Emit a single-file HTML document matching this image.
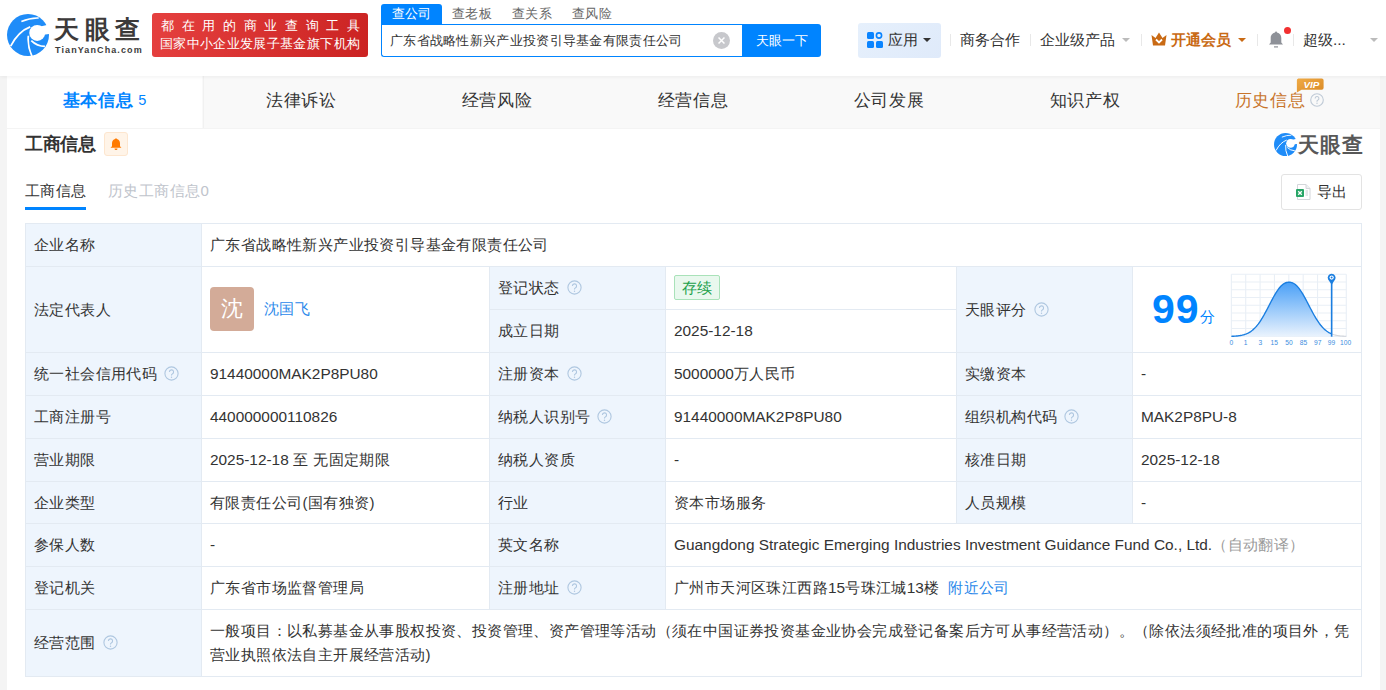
<!DOCTYPE html>
<html><head><meta charset="utf-8">
<style>
*{box-sizing:border-box;margin:0;padding:0}
html,body{width:1386px;height:690px;overflow:hidden}
body{background:#f4f4f4;text-spacing-trim:space-all;font-family:"Liberation Sans",sans-serif;color:#333;position:relative}
.abs{position:absolute}
#hdr{position:absolute;left:0;top:0;width:1386px;height:76px;background:#fff;box-shadow:0 1px 4px rgba(0,0,0,.06);z-index:5}
.badge{position:absolute;left:152px;top:13px;width:216px;height:44px;border-radius:3px;background:linear-gradient(100deg,#e5403f,#cb2322);color:#fff;font-size:13.2px;font-weight:500}
.badge .l1{position:absolute;left:9px;top:4px;width:199px;line-height:18px;text-align:justify;text-align-last:justify;letter-spacing:0}
.badge .l2{position:absolute;left:8px;top:22px;width:205px;line-height:18px;white-space:nowrap;letter-spacing:.35px}
.stabs{position:absolute;left:381px;top:4px;height:20px;font-size:13px;letter-spacing:.3px;line-height:20px}
.stab{position:absolute;top:0;height:20px;color:#666;white-space:nowrap}
.stab.on{background:#0084ff;color:#fff;border-radius:3px 3px 0 0;width:61px;text-align:center}
.sbox{position:absolute;left:381px;top:24px;width:362px;height:33px;border:1px solid #0084ff;border-right:0;border-radius:0 0 0 3px;background:#fff}
.sbox .t{position:absolute;left:8px;top:0;line-height:31px;font-size:13px;letter-spacing:.3px;color:#333;white-space:nowrap}
.sbtn{position:absolute;left:742px;top:24px;width:79px;height:33px;background:#0084ff;border-radius:0 3px 3px 0;color:#fff;font-size:13.2px;line-height:33px;text-align:center}
.nav{position:absolute;top:22px;height:35px;line-height:35px;font-size:15.4px;color:#333;white-space:nowrap}
.dv{position:absolute;top:34px;width:1px;height:12px;background:#e8e8e8}
.caret{position:absolute;width:0;height:0;border-left:4px solid transparent;border-right:4px solid transparent;border-top:4px solid #333}
#card{position:absolute;left:7px;top:76px;width:1373px;height:620px;background:#fff}
.tabbar{position:absolute;left:7px;top:76px;width:1373px;height:53px;background:#f9f9f9;border-bottom:1px solid #f4f4f4}
.tab{position:absolute;top:0;height:52px;line-height:50px;text-align:center;font-size:17px;letter-spacing:.6px;color:#333}
.tab.on{background:#fff;color:#0084ff;font-weight:bold}
.cl,.cv{position:absolute;border:1px solid #e3eaf2;margin:0;white-space:nowrap;font-size:15px;letter-spacing:.4px;color:#333}
.cl{background:#eef5fd}
.cv{background:#fff}
.in{position:absolute;left:8px;top:0;height:100%;display:flex;align-items:center}
.in>span{white-space:nowrap}
.q{margin-left:7px;vertical-align:-2px}
.n,.en{letter-spacing:0;font-size:15.4px}
.link{color:#2a88ea}
.gray{color:#999}
.avatar{display:inline-block;vertical-align:middle;position:relative;top:-2px;width:44px;height:44px;border-radius:4px;background:#d3ab98;color:#fff;font-size:22px;line-height:44px;text-align:center}
.tag{display:inline-block;vertical-align:middle;position:relative;top:-2px;height:25px;line-height:23px;width:46px;text-align:center;border:1px solid #a9e2b9;background:#e9f8ee;color:#22a04a;border-radius:2px;font-size:15px;letter-spacing:.2px}
.scopetxt{position:absolute;left:8px;top:9px;width:1140px;white-space:normal;line-height:24.4px;font-size:15px;letter-spacing:.4px}
</style></head><body>
<div id="hdr">
  <svg class="abs" style="left:7px;top:14px" width="42" height="42" viewBox="45 65 570 570">
    <circle cx="330" cy="350" r="285" fill="#1f8cf8"/>
    <circle cx="455" cy="322" r="108" fill="#fff"/>
    <path d="M470 240 L640 200 L640 335 L545 345 Z" fill="#fff"/>
    <path d="M240 168 Q360 115 475 120" stroke="#fff" stroke-width="22" fill="none"/>
    <path d="M95 500 Q200 300 360 240" stroke="#fff" stroke-width="24" fill="none"/>
    <path d="M335 360 Q320 500 385 640" stroke="#fff" stroke-width="24" fill="none"/>
    <path d="M375 425 Q450 500 560 505" stroke="#fff" stroke-width="24" fill="none"/>
  </svg>
  <div class="abs" style="left:54px;top:12px;font-size:25px;line-height:34px;font-weight:bold;color:#3c3a3a;letter-spacing:5.5px;white-space:nowrap">天眼查</div>
  <div class="abs" style="left:55px;top:44px;font-size:9px;line-height:12px;font-weight:bold;color:#3c3c3c;letter-spacing:1.1px;white-space:nowrap">TianYanCha.com</div>
  <div class="badge"><div class="l1">都在用的商业查询工具</div><div class="l2">国家中小企业发展子基金旗下机构</div></div>
  <div class="stabs">
    <div class="stab on" style="left:0">查公司</div>
    <div class="stab" style="left:71px">查老板</div>
    <div class="stab" style="left:131px">查关系</div>
    <div class="stab" style="left:191px">查风险</div>
  </div>
  <div class="sbox"><div class="t">广东省战略性新兴产业投资引导基金有限责任公司</div>
    <svg class="abs" style="left:331px;top:7px" width="17" height="17" viewBox="0 0 16 16"><circle cx="8" cy="8" r="8" fill="#c7c8cc"/><path d="M5.2 5.2L10.8 10.8M10.8 5.2L5.2 10.8" stroke="#fff" stroke-width="1.4"/></svg>
  </div>
  <div class="sbtn">天眼一下</div>
  <div class="abs" style="left:858px;top:23px;width:83px;height:35px;border-radius:3px;background:linear-gradient(135deg,#e6f0fc,#dfeafa)"></div>
  <svg class="abs" style="left:867px;top:32px" width="16" height="16" viewBox="0 0 16 16"><rect x="0" y="0" width="7" height="7" rx="1.5" fill="#0a84ff"/><circle cx="12" cy="3.5" r="2.6" fill="none" stroke="#0a84ff" stroke-width="1.6"/><rect x="0" y="9" width="7" height="7" rx="1.5" fill="#0a84ff"/><rect x="9" y="9" width="7" height="7" rx="1.5" fill="#0a84ff"/></svg>
  <div class="nav" style="left:888px">应用</div>
  <div class="caret" style="left:923px;top:38px"></div>
  <div class="dv" style="left:950px"></div>
  <div class="nav" style="left:960px">商务合作</div>
  <div class="dv" style="left:1030px"></div>
  <div class="nav" style="left:1040px">企业级产品</div>
  <div class="caret" style="left:1122px;top:38px;border-top-color:#bbb"></div>
  <div class="dv" style="left:1141px"></div>
  <svg class="abs" style="left:1151px;top:32px" width="16" height="14" viewBox="0 0 16 14"><path d="M0.5 3 L4.5 6 L8 0.5 L11.5 6 L15.5 3 L14 13.5 L2 13.5 Z" fill="#c96a14"/><path d="M5 7.5 L8 10.5 L11 7.5" stroke="#fff" stroke-width="1.8" fill="none"/></svg>
  <div class="nav" style="left:1171px;color:#c96a14;font-weight:bold">开通会员</div>
  <div class="caret" style="left:1238px;top:38px;border-top-color:#c96a14"></div>
  <div class="dv" style="left:1257px"></div>
  <svg class="abs" style="left:1268px;top:31px" width="16" height="17" viewBox="0 0 16 17"><path d="M8 0.5c.6 0 1 .4 1 .9 2.8.5 4.3 2.8 4.3 5.6v4.5l1.7 2H1l1.7-2V7c0-2.8 1.5-5.1 4.3-5.6 0-.5.4-.9 1-.9z" fill="#8e9198"/><rect x="6" y="15.3" width="4" height="1.2" fill="#8e9198"/></svg>
  <div class="abs" style="left:1284px;top:27px;width:7px;height:7px;border-radius:50%;background:#f23030"></div>
  <div class="dv" style="left:1293px"></div>
  <div class="nav" style="left:1303px">超级...</div>
  <div class="caret" style="left:1370px;top:38px;border-top-color:#bbb"></div>
</div>
<div id="card"></div>
<div class="tabbar">
  <div class="tab on" style="left:0;width:195px">基本信息<span style="font-weight:normal;font-size:14.5px;letter-spacing:0;margin-left:5px;position:relative;top:-1px">5</span></div>
  <div class="tab" style="left:196px;width:196px;border-left:1px solid #f1f1f1">法律诉讼</div>
  <div class="tab" style="left:392px;width:196px">经营风险</div>
  <div class="tab" style="left:588px;width:196px">经营信息</div>
  <div class="tab" style="left:784px;width:196px">公司发展</div>
  <div class="tab" style="left:980px;width:196px">知识产权</div>
  <div class="tab" style="left:1174px;width:197px;color:#c8742a">历史信息<svg style="margin-left:5px;vertical-align:-1px" width="14" height="14" viewBox="0 0 14 14"><circle cx="7" cy="7" r="6.3" fill="none" stroke="#bfcad6" stroke-width="1.1"/><path d="M5.1 5.4a1.9 1.9 0 1 1 2.6 1.8c-.5.2-.7.5-.7 1v.5" fill="none" stroke="#bfcad6" stroke-width="1.1"/><circle cx="7" cy="10.3" r=".7" fill="#bfcad6"/></svg></div>
  <svg class="abs" style="left:1289px;top:2px" width="28" height="15" viewBox="0 0 29 16"><defs><linearGradient id="vg" x1="0" y1="0" x2="1" y2="1"><stop offset="0" stop-color="#f0ab45"/><stop offset="1" stop-color="#d98926"/></linearGradient></defs><path d="M2 0.5h25a2 2 0 0 1 2 2v8a2 2 0 0 1-2 2H5.5L0.5 15.5V2.5a2 2 0 0 1 1.5-2z" fill="url(#vg)"/><text x="16" y="10.5" text-anchor="middle" font-size="10.5" font-weight="bold" font-style="italic" fill="#fff" font-family="Liberation Sans">VIP</text></svg>
</div>
<div class="abs" style="left:25px;top:130px;font-size:18px;letter-spacing:-.3px;line-height:28px;font-weight:bold;color:#333">工商信息</div>
<div class="abs" style="left:104px;top:132px;width:24px;height:24px;border-radius:3px;background:#fff4e8;border:1px solid #fde6cf"></div><svg class="abs" style="left:110px;top:138px" width="12" height="12" viewBox="0 0 12 12"><path d="M6 0.3c.5 0 .8.3.8.7 2 .4 3.2 2 3.2 4.2v3l1.5 1.6H.5L2 8.2v-3C2 3 3.2 1.4 5.2 1c0-.4.3-.7.8-.7z" fill="#ff7a00"/><path d="M4.5 10.6h3a1.5 1.5 0 0 1-3 0z" fill="#ff7a00"/></svg>
<div class="abs" style="left:25px;top:178px;font-size:15px;letter-spacing:.4px;line-height:26px;color:#333">工商信息</div>
<div class="abs" style="left:25px;top:207px;width:61px;height:3px;background:#0084ff"></div>
<div class="abs" style="left:108px;top:178px;font-size:15px;letter-spacing:.4px;line-height:26px;color:#c0c4cc">历史工商信息0</div>
<div class="abs" style="left:1281px;top:174px;width:81px;height:36px;border:1px solid #e3e3e3;border-radius:3px"></div>
<svg class="abs" style="left:1295px;top:184px" width="16" height="16" viewBox="0 0 16 16"><path d="M2.5 0.5h8.5l4 4v11H2.5z" fill="#fff" stroke="#d3d6da" stroke-width="1"/><path d="M11 0.5v4h4" fill="#f0f1f3" stroke="#d3d6da" stroke-width="1"/><rect x="10.5" y="6.5" width="2.5" height="1" fill="#c9ced4"/><rect x="10.5" y="8.5" width="2.5" height="1" fill="#c9ced4"/><rect x="10.5" y="10.5" width="2.5" height="1" fill="#c9ced4"/><rect x="1" y="5" width="8" height="8" rx="1" fill="#27a566"/><path d="M3.2 7.2L6.8 10.8M6.8 7.2L3.2 10.8" stroke="#fff" stroke-width="1.3"/></svg>
<div class="abs" style="left:1317px;top:179px;font-size:15px;letter-spacing:.4px;line-height:26px;color:#333">导出</div>
<svg class="abs" style="left:1274px;top:133px" width="23" height="23" viewBox="45 65 570 570"><circle cx="330" cy="350" r="285" fill="#1f8cf8"/><circle cx="455" cy="322" r="108" fill="#fff"/><path d="M470 240 L640 200 L640 335 L545 345 Z" fill="#fff"/><path d="M240 168 Q360 115 475 120" stroke="#fff" stroke-width="22" fill="none"/><path d="M95 500 Q200 300 360 240" stroke="#fff" stroke-width="24" fill="none"/><path d="M335 360 Q320 500 385 640" stroke="#fff" stroke-width="24" fill="none"/><path d="M375 425 Q450 500 560 505" stroke="#fff" stroke-width="24" fill="none"/></svg>
<div class="abs" style="left:1298px;top:130px;font-size:21px;line-height:30px;font-weight:bold;color:#585858;white-space:nowrap;letter-spacing:1px">天眼查</div>
<div class="cl" style="left:25px;top:223px;width:177px;height:44px;line-height:42px"><div class="in"><span>企业名称</span></div></div>
<div class="cv" style="left:201px;top:223px;width:1161px;height:44px;line-height:42px"><div class="in"><span>广东省战略性新兴产业投资引导基金有限责任公司</span></div></div>
<div class="cl" style="left:25px;top:266px;width:177px;height:87px;line-height:85px"><div class="in"><span>法定代表人</span></div></div>
<div class="cv" style="left:201px;top:266px;width:289px;height:87px;line-height:85px"><div class="in"><span><span class="avatar">沈</span><span class="link" style="margin-left:10px;position:relative;top:-1px">沈国飞</span></span></div></div>
<div class="cl" style="left:489px;top:266px;width:177px;height:44px;line-height:42px"><div class="in"><span>登记状态<svg class="q" width="15" height="15" viewBox="0 0 15 15"><circle cx="7.5" cy="7.5" r="6.6" fill="none" stroke="#afc7e0" stroke-width="1.1"/><path d="M5.4 5.9a2.1 2.1 0 1 1 2.9 2c-.55.25-.8.55-.8 1.1v.6" fill="none" stroke="#afc7e0" stroke-width="1.1"/><circle cx="7.5" cy="11.2" r=".7" fill="#afc7e0"/></svg></span></div></div>
<div class="cv" style="left:665px;top:266px;width:292px;height:44px;line-height:42px"><div class="in"><span><span class="tag">存续</span></span></div></div>
<div class="cl" style="left:489px;top:309px;width:177px;height:44px;line-height:42px"><div class="in"><span>成立日期</span></div></div>
<div class="cv" style="left:665px;top:309px;width:292px;height:44px;line-height:42px"><div class="in"><span><span class="n">2025-12-18</span></span></div></div>
<div class="cl" style="left:956px;top:266px;width:177px;height:87px;line-height:85px"><div class="in"><span>天眼评分<svg class="q" width="15" height="15" viewBox="0 0 15 15"><circle cx="7.5" cy="7.5" r="6.6" fill="none" stroke="#afc7e0" stroke-width="1.1"/><path d="M5.4 5.9a2.1 2.1 0 1 1 2.9 2c-.55.25-.8.55-.8 1.1v.6" fill="none" stroke="#afc7e0" stroke-width="1.1"/><circle cx="7.5" cy="11.2" r=".7" fill="#afc7e0"/></svg></span></div></div>
<div class="cv" style="left:1132px;top:266px;width:230px;height:87px"><div class="abs" style="left:19px;top:14px;font-size:41px;line-height:56px;font-weight:bold;color:#0084ff;letter-spacing:1px">99</div>
<div class="abs" style="left:67px;top:37px;font-size:15px;line-height:26px;color:#0084ff">分</div>
<svg class="abs" style="left:87px;top:-2px" width="140" height="85" viewBox="0 0 1136 690">
<defs><linearGradient id="bg" x1="0" y1="0" x2="0" y2="1"><stop offset="0" stop-color="#4aa0f7"/><stop offset="1" stop-color="#eaf3fd"/></linearGradient></defs>
<line x1="92" y1="75" x2="92" y2="580" stroke="#e9eff6" stroke-width="9"/><line x1="208.6" y1="75" x2="208.6" y2="580" stroke="#e9eff6" stroke-width="9"/><line x1="325.2" y1="75" x2="325.2" y2="580" stroke="#e9eff6" stroke-width="9"/><line x1="441.8" y1="75" x2="441.8" y2="580" stroke="#e9eff6" stroke-width="9"/><line x1="558.5" y1="75" x2="558.5" y2="580" stroke="#e9eff6" stroke-width="9"/><line x1="675" y1="75" x2="675" y2="580" stroke="#e9eff6" stroke-width="9"/><line x1="791.7" y1="75" x2="791.7" y2="580" stroke="#e9eff6" stroke-width="9"/><line x1="908.3" y1="75" x2="908.3" y2="580" stroke="#e9eff6" stroke-width="9"/><line x1="1025" y1="75" x2="1025" y2="580" stroke="#e9eff6" stroke-width="9"/><line x1="92" y1="75" x2="1025" y2="75" stroke="#e9eff6" stroke-width="9"/><line x1="92" y1="138" x2="1025" y2="138" stroke="#e9eff6" stroke-width="9"/><line x1="92" y1="201" x2="1025" y2="201" stroke="#e9eff6" stroke-width="9"/><line x1="92" y1="264" x2="1025" y2="264" stroke="#e9eff6" stroke-width="9"/><line x1="92" y1="327" x2="1025" y2="327" stroke="#e9eff6" stroke-width="9"/><line x1="92" y1="390" x2="1025" y2="390" stroke="#e9eff6" stroke-width="9"/><line x1="92" y1="453" x2="1025" y2="453" stroke="#e9eff6" stroke-width="9"/><line x1="92" y1="516" x2="1025" y2="516" stroke="#e9eff6" stroke-width="9"/><line x1="92" y1="580" x2="1025" y2="580" stroke="#e9eff6" stroke-width="9"/>
<path d="M92.0 578.9 L98.8 578.6 L105.6 578.4 L112.4 578.0 L119.2 577.6 L126.0 577.2 L132.8 576.6 L139.6 576.0 L146.4 575.3 L153.2 574.4 L160.0 573.5 L166.8 572.3 L173.6 571.1 L180.4 569.6 L187.2 567.9 L194.0 566.1 L200.8 563.9 L207.6 561.6 L214.4 558.9 L221.2 555.9 L228.0 552.6 L234.8 549.0 L241.6 544.9 L248.4 540.5 L255.2 535.7 L262.0 530.4 L268.8 524.6 L275.6 518.4 L282.4 511.7 L289.2 504.5 L296.0 496.8 L302.8 488.6 L309.6 479.9 L316.4 470.7 L323.2 460.9 L330.0 450.7 L336.8 440.1 L343.6 429.0 L350.4 417.4 L357.2 405.6 L364.0 393.3 L370.8 380.8 L377.6 368.0 L384.4 355.1 L391.2 342.0 L398.0 328.8 L404.8 315.6 L411.6 302.5 L418.4 289.5 L425.2 276.7 L432.0 264.2 L438.8 251.9 L445.6 240.1 L452.4 228.7 L459.2 217.8 L466.0 207.5 L472.8 197.8 L479.6 188.8 L486.4 180.5 L493.2 172.9 L500.0 166.1 L506.8 160.1 L513.6 154.9 L520.4 150.5 L527.2 146.9 L534.0 144.2 L540.8 142.1 L547.6 140.8 L554.4 140.1 L561.2 140.0 L568.0 140.3 L574.8 141.2 L581.6 142.8 L588.4 145.1 L595.2 148.1 L602.0 152.0 L608.8 156.7 L615.6 162.1 L622.4 168.4 L629.2 175.5 L636.0 183.3 L642.8 191.9 L649.6 201.2 L656.4 211.1 L663.2 221.6 L670.0 232.7 L676.8 244.2 L683.6 256.2 L690.4 268.6 L697.2 281.2 L704.0 294.1 L710.8 307.1 L717.6 320.3 L724.4 333.5 L731.2 346.6 L738.0 359.7 L744.8 372.6 L751.6 385.3 L758.4 397.7 L765.2 409.8 L772.0 421.6 L778.8 432.9 L785.6 443.9 L792.4 454.4 L799.2 464.4 L806.0 474.0 L812.8 483.0 L819.6 491.6 L826.4 499.6 L833.2 507.1 L840.0 514.1 L846.8 520.7 L853.6 526.7 L860.4 532.3 L867.2 537.4 L874.0 542.1 L880.8 546.4 L887.6 550.3 L894.4 553.8 L901.2 557.0 L908.0 559.9 L908 580 L92 580 Z" fill="url(#bg)"/>
<path d="M92.0 578.9 L98.8 578.6 L105.6 578.4 L112.4 578.0 L119.2 577.6 L126.0 577.2 L132.8 576.6 L139.6 576.0 L146.4 575.3 L153.2 574.4 L160.0 573.5 L166.8 572.3 L173.6 571.1 L180.4 569.6 L187.2 567.9 L194.0 566.1 L200.8 563.9 L207.6 561.6 L214.4 558.9 L221.2 555.9 L228.0 552.6 L234.8 549.0 L241.6 544.9 L248.4 540.5 L255.2 535.7 L262.0 530.4 L268.8 524.6 L275.6 518.4 L282.4 511.7 L289.2 504.5 L296.0 496.8 L302.8 488.6 L309.6 479.9 L316.4 470.7 L323.2 460.9 L330.0 450.7 L336.8 440.1 L343.6 429.0 L350.4 417.4 L357.2 405.6 L364.0 393.3 L370.8 380.8 L377.6 368.0 L384.4 355.1 L391.2 342.0 L398.0 328.8 L404.8 315.6 L411.6 302.5 L418.4 289.5 L425.2 276.7 L432.0 264.2 L438.8 251.9 L445.6 240.1 L452.4 228.7 L459.2 217.8 L466.0 207.5 L472.8 197.8 L479.6 188.8 L486.4 180.5 L493.2 172.9 L500.0 166.1 L506.8 160.1 L513.6 154.9 L520.4 150.5 L527.2 146.9 L534.0 144.2 L540.8 142.1 L547.6 140.8 L554.4 140.1 L561.2 140.0 L568.0 140.3 L574.8 141.2 L581.6 142.8 L588.4 145.1 L595.2 148.1 L602.0 152.0 L608.8 156.7 L615.6 162.1 L622.4 168.4 L629.2 175.5 L636.0 183.3 L642.8 191.9 L649.6 201.2 L656.4 211.1 L663.2 221.6 L670.0 232.7 L676.8 244.2 L683.6 256.2 L690.4 268.6 L697.2 281.2 L704.0 294.1 L710.8 307.1 L717.6 320.3 L724.4 333.5 L731.2 346.6 L738.0 359.7 L744.8 372.6 L751.6 385.3 L758.4 397.7 L765.2 409.8 L772.0 421.6 L778.8 432.9 L785.6 443.9 L792.4 454.4 L799.2 464.4 L806.0 474.0 L812.8 483.0 L819.6 491.6 L826.4 499.6 L833.2 507.1 L840.0 514.1 L846.8 520.7 L853.6 526.7 L860.4 532.3 L867.2 537.4 L874.0 542.1 L880.8 546.4 L887.6 550.3 L894.4 553.8 L901.2 557.0 L908.0 559.9" fill="none" stroke="#1a7ee0" stroke-width="11"/>
<path d="M908.0 559.9 L913.9 562.1 L919.7 564.1 L925.5 565.9 L931.4 567.6 L937.2 569.0 L943.1 570.4 L949.0 571.6 L954.8 572.6 L960.6 573.6 L966.5 574.4 L972.4 575.1 L978.2 575.8 L984.0 576.4 L989.9 576.9 L995.8 577.3 L1001.6 577.7 L1007.5 578.0 L1013.3 578.3 L1019.1 578.6 L1025.0 578.8" fill="none" stroke="#d0d4da" stroke-width="9"/>
<line x1="906" y1="110" x2="906" y2="582" stroke="#1a7ee0" stroke-width="13"/>
<path d="M906 160 L878 118 A32 32 0 1 1 934 118 Z" fill="#1a7ee0"/>
<circle cx="906" cy="102" r="17" fill="#fff"/><circle cx="906" cy="102" r="8" fill="#1a7ee0"/>
<text x="92" y="652" text-anchor="middle" font-size="54" fill="#3a8de0" font-family="Liberation Sans">0</text><text x="208" y="652" text-anchor="middle" font-size="54" fill="#3a8de0" font-family="Liberation Sans">1</text><text x="328" y="652" text-anchor="middle" font-size="54" fill="#3a8de0" font-family="Liberation Sans">3</text><text x="440" y="652" text-anchor="middle" font-size="54" fill="#3a8de0" font-family="Liberation Sans">15</text><text x="560" y="652" text-anchor="middle" font-size="54" fill="#3a8de0" font-family="Liberation Sans">50</text><text x="677" y="652" text-anchor="middle" font-size="54" fill="#3a8de0" font-family="Liberation Sans">85</text><text x="793" y="652" text-anchor="middle" font-size="54" fill="#3a8de0" font-family="Liberation Sans">97</text><text x="905" y="652" text-anchor="middle" font-size="54" fill="#3a8de0" font-family="Liberation Sans">99</text><text x="1020" y="652" text-anchor="middle" font-size="54" fill="#3a8de0" font-family="Liberation Sans">100</text>
</svg></div>
<div class="cl" style="left:25px;top:352px;width:177px;height:44px;line-height:42px"><div class="in"><span>统一社会信用代码<svg class="q" width="15" height="15" viewBox="0 0 15 15"><circle cx="7.5" cy="7.5" r="6.6" fill="none" stroke="#afc7e0" stroke-width="1.1"/><path d="M5.4 5.9a2.1 2.1 0 1 1 2.9 2c-.55.25-.8.55-.8 1.1v.6" fill="none" stroke="#afc7e0" stroke-width="1.1"/><circle cx="7.5" cy="11.2" r=".7" fill="#afc7e0"/></svg></span></div></div>
<div class="cv" style="left:201px;top:352px;width:289px;height:44px;line-height:42px"><div class="in"><span><span class="n">91440000MAK2P8PU80</span></span></div></div>
<div class="cl" style="left:489px;top:352px;width:177px;height:44px;line-height:42px"><div class="in"><span>注册资本<svg class="q" width="15" height="15" viewBox="0 0 15 15"><circle cx="7.5" cy="7.5" r="6.6" fill="none" stroke="#afc7e0" stroke-width="1.1"/><path d="M5.4 5.9a2.1 2.1 0 1 1 2.9 2c-.55.25-.8.55-.8 1.1v.6" fill="none" stroke="#afc7e0" stroke-width="1.1"/><circle cx="7.5" cy="11.2" r=".7" fill="#afc7e0"/></svg></span></div></div>
<div class="cv" style="left:665px;top:352px;width:292px;height:44px;line-height:42px"><div class="in"><span><span class="n">5000000</span>万人民币</span></div></div>
<div class="cl" style="left:956px;top:352px;width:177px;height:44px;line-height:42px"><div class="in"><span>实缴资本</span></div></div>
<div class="cv" style="left:1132px;top:352px;width:230px;height:44px;line-height:42px"><div class="in"><span><span class="n">-</span></span></div></div>
<div class="cl" style="left:25px;top:395px;width:177px;height:44px;line-height:42px"><div class="in"><span>工商注册号</span></div></div>
<div class="cv" style="left:201px;top:395px;width:289px;height:44px;line-height:42px"><div class="in"><span><span class="n">440000000110826</span></span></div></div>
<div class="cl" style="left:489px;top:395px;width:177px;height:44px;line-height:42px"><div class="in"><span>纳税人识别号<svg class="q" width="15" height="15" viewBox="0 0 15 15"><circle cx="7.5" cy="7.5" r="6.6" fill="none" stroke="#afc7e0" stroke-width="1.1"/><path d="M5.4 5.9a2.1 2.1 0 1 1 2.9 2c-.55.25-.8.55-.8 1.1v.6" fill="none" stroke="#afc7e0" stroke-width="1.1"/><circle cx="7.5" cy="11.2" r=".7" fill="#afc7e0"/></svg></span></div></div>
<div class="cv" style="left:665px;top:395px;width:292px;height:44px;line-height:42px"><div class="in"><span><span class="n">91440000MAK2P8PU80</span></span></div></div>
<div class="cl" style="left:956px;top:395px;width:177px;height:44px;line-height:42px"><div class="in"><span>组织机构代码<svg class="q" width="15" height="15" viewBox="0 0 15 15"><circle cx="7.5" cy="7.5" r="6.6" fill="none" stroke="#afc7e0" stroke-width="1.1"/><path d="M5.4 5.9a2.1 2.1 0 1 1 2.9 2c-.55.25-.8.55-.8 1.1v.6" fill="none" stroke="#afc7e0" stroke-width="1.1"/><circle cx="7.5" cy="11.2" r=".7" fill="#afc7e0"/></svg></span></div></div>
<div class="cv" style="left:1132px;top:395px;width:230px;height:44px;line-height:42px"><div class="in"><span><span class="n">MAK2P8PU-8</span></span></div></div>
<div class="cl" style="left:25px;top:438px;width:177px;height:44px;line-height:42px"><div class="in"><span>营业期限</span></div></div>
<div class="cv" style="left:201px;top:438px;width:289px;height:44px;line-height:42px"><div class="in"><span><span class="n">2025-12-18</span> 至 无固定期限</span></div></div>
<div class="cl" style="left:489px;top:438px;width:177px;height:44px;line-height:42px"><div class="in"><span>纳税人资质</span></div></div>
<div class="cv" style="left:665px;top:438px;width:292px;height:44px;line-height:42px"><div class="in"><span><span class="n">-</span></span></div></div>
<div class="cl" style="left:956px;top:438px;width:177px;height:44px;line-height:42px"><div class="in"><span>核准日期</span></div></div>
<div class="cv" style="left:1132px;top:438px;width:230px;height:44px;line-height:42px"><div class="in"><span><span class="n">2025-12-18</span></span></div></div>
<div class="cl" style="left:25px;top:481px;width:177px;height:43px;line-height:41px"><div class="in"><span>企业类型</span></div></div>
<div class="cv" style="left:201px;top:481px;width:289px;height:43px;line-height:41px"><div class="in"><span>有限责任公司(国有独资)</span></div></div>
<div class="cl" style="left:489px;top:481px;width:177px;height:43px;line-height:41px"><div class="in"><span>行业</span></div></div>
<div class="cv" style="left:665px;top:481px;width:292px;height:43px;line-height:41px"><div class="in"><span>资本市场服务</span></div></div>
<div class="cl" style="left:956px;top:481px;width:177px;height:43px;line-height:41px"><div class="in"><span>人员规模</span></div></div>
<div class="cv" style="left:1132px;top:481px;width:230px;height:43px;line-height:41px"><div class="in"><span><span class="n">-</span></span></div></div>
<div class="cl" style="left:25px;top:523px;width:177px;height:44px;line-height:42px"><div class="in"><span>参保人数</span></div></div>
<div class="cv" style="left:201px;top:523px;width:289px;height:44px;line-height:42px"><div class="in"><span><span class="n">-</span></span></div></div>
<div class="cl" style="left:489px;top:523px;width:177px;height:44px;line-height:42px"><div class="in"><span>英文名称</span></div></div>
<div class="cv" style="left:665px;top:523px;width:697px;height:44px;line-height:42px"><div class="in"><span><span class="en">Guangdong Strategic Emerging Industries Investment Guidance Fund Co., Ltd.</span><span class="gray">（自动翻译）</span></span></div></div>
<div class="cl" style="left:25px;top:566px;width:177px;height:44px;line-height:42px"><div class="in"><span>登记机关</span></div></div>
<div class="cv" style="left:201px;top:566px;width:289px;height:44px;line-height:42px"><div class="in"><span>广东省市场监督管理局</span></div></div>
<div class="cl" style="left:489px;top:566px;width:177px;height:44px;line-height:42px"><div class="in"><span>注册地址<svg class="q" width="15" height="15" viewBox="0 0 15 15"><circle cx="7.5" cy="7.5" r="6.6" fill="none" stroke="#afc7e0" stroke-width="1.1"/><path d="M5.4 5.9a2.1 2.1 0 1 1 2.9 2c-.55.25-.8.55-.8 1.1v.6" fill="none" stroke="#afc7e0" stroke-width="1.1"/><circle cx="7.5" cy="11.2" r=".7" fill="#afc7e0"/></svg></span></div></div>
<div class="cv" style="left:665px;top:566px;width:697px;height:44px;line-height:42px"><div class="in"><span>广州市天河区珠江西路<span class="n">15</span>号珠江城<span class="n">13</span>楼<span class="link" style="margin-left:9px">附近公司</span></span></div></div>
<div class="cl" style="left:25px;top:609px;width:177px;height:68px;line-height:66px"><div class="in"><span>经营范围<svg class="q" width="15" height="15" viewBox="0 0 15 15"><circle cx="7.5" cy="7.5" r="6.6" fill="none" stroke="#afc7e0" stroke-width="1.1"/><path d="M5.4 5.9a2.1 2.1 0 1 1 2.9 2c-.55.25-.8.55-.8 1.1v.6" fill="none" stroke="#afc7e0" stroke-width="1.1"/><circle cx="7.5" cy="11.2" r=".7" fill="#afc7e0"/></svg></span></div></div>
<div class="cv scope" style="left:201px;top:609px;width:1161px;height:68px"><div class="scopetxt">一般项目：以私募基金从事股权投资、投资管理、资产管理等活动（须在中国证券投资基金业协会完成登记备案后方可从事经营活动）。（除依法须经批准的项目外，凭<br>营业执照依法自主开展经营活动)</div></div>
</body></html>
